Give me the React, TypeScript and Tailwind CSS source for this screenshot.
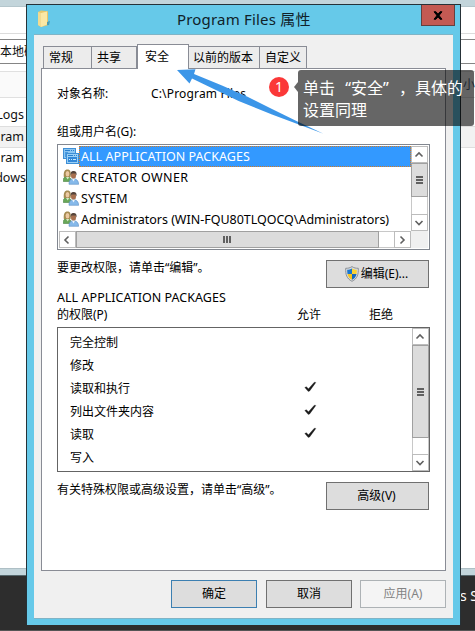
import React from "react";

const users = [
  { name: "ALL APPLICATION PACKAGES", kind: "apps", tracking: "tracking-[0.04px]" },
  { name: "CREATOR OWNER", kind: "people", tracking: "tracking-[0.36px]" },
  { name: "SYSTEM", kind: "people", tracking: "tracking-[0.1px]" },
  { name: "Administrators (WIN-FQU80TLQOCQ\\Administrators)", kind: "people", tracking: "tracking-[-0.02px]" },
];

const permissions = [
  { name: "完全控制", allow: false },
  { name: "修改", allow: false },
  { name: "读取和执行", allow: true },
  { name: "列出文件夹内容", allow: true },
  { name: "读取", allow: true },
  { name: "写入", allow: false },
];

function AppsIcon() {
  return (
    <svg width="16" height="16" viewBox="0 0 16 16" className="mb-px shrink-0">
      <rect x=".5" y=".5" width="12" height="10" fill="#8cc6f2" stroke="#3f8fd6" />
      <path d="M2 2.500h5M8 2.500h1M10 2.500h1" stroke="#2a80cf" />
      <path d="M2 4h3v5H2z" fill="#4a9be0" />
      <rect x="3.500" y="5.500" width="12" height="10" fill="#9ad0f6" stroke="#3f8fd6" />
      <path d="M5 7.500h5M11 7.500h1M13 7.500h1" stroke="#2a80cf" />
      <rect x="5" y="9" width="9" height="5" fill="#3388d8" />
      <path d="M6 11.500h1M8 11.500h1M10 11.500h3" stroke="#c6eaff" />
    </svg>
  );
}

function PeopleIcon() {
  return (
    <svg width="16" height="16" viewBox="0 0 16 16" className="mb-px shrink-0">
      <path d="M.3 12.500C0 9.500 1 7.500 4 7.500s4 2 4.500 5z" fill="#68a758" stroke="#4d8545" strokeWidth=".6" />
      <path d="M.8 8C.3 3 1.500.4 4.500.4 7.500.4 8.200 3 7.600 8z" fill="#a58b52" />
      <ellipse cx="4.500" cy="4.800" rx="1.900" ry="2.700" fill="#ecc9a3" />
      <path d="M3 8l1.700 2.500L6.300 8z" fill="#dbe6c4" />
      <path d="M6 15.300c0-4 1.500-5.500 4.500-5.500s5 1.800 5.200 5.500z" fill="#86b9ea" stroke="#5a8fc4" strokeWidth=".6" />
      <ellipse cx="10.500" cy="6.500" rx="2.500" ry="3.300" fill="#a8704f" />
      <path d="M7.700 6.500C7.200 3 8.700 1.700 10.500 1.900c2.700 0 3.500 2 2.900 4.600l-1-2-3.600.1z" fill="#55443a" />
      <path d="M9 9.800l1.500 2.700 1.500-2.700z" fill="#edf5fd" />
    </svg>
  );
}

function ShieldIcon() {
  return (
    <svg width="14" height="16" viewBox="0 0 14 16" className="shrink-0">
      <path d="M7 .6C5 2 3 2.300.7 2.300c-.3 6 1 10.500 6.300 13 5.300-2.500 6.600-7 6.300-13C11 2.300 9 2 7 .6z" fill="#d6dade" stroke="#83898e" strokeWidth=".9" />
      <path d="M7 2.500C5.500 3.400 4 3.700 2.200 3.800c0 1.500 0 2.700.3 4.200H7z" fill="#1976cf" />
      <path d="M7 2.500c1.500.9 3 1.200 4.800 1.300 0 1.500 0 2.700-.3 4.200H7z" fill="#fbd332" />
      <path d="M2.500 8C3 10.700 4.500 12.500 7 13.800V8z" fill="#f7c51e" />
      <path d="M11.500 8C11 10.700 9.500 12.500 7 13.800V8z" fill="#1668bd" />
    </svg>
  );
}

function Chevron({ dir }: { dir: "up" | "down" | "left" | "right" }) {
  const d = {
    up: "M1.500 6.500L5 3l3.500 3.500",
    down: "M1.500 3L5 6.500 8.500 3",
    left: "M6.500 1.500L3 5l3.500 3.500",
    right: "M3.500 1.500L7 5 3.500 8.500",
  }[dir];
  return (
    <svg width="10" height="10" viewBox="0 0 10 10" className="-ml-px">
      <path d={d} fill="none" stroke="#606060" strokeWidth="1.600" />
    </svg>
  );
}

function ScrollButton({ dir }: { dir: "up" | "down" | "left" | "right" }) {
  return (
    <div className="flex size-[17px] shrink-0 items-center justify-center border border-[#bcbcbc] bg-white">
      <Chevron dir={dir} />
    </div>
  );
}

function Grip({ vertical = false }: { vertical?: boolean }) {
  return (
    <div className={vertical ? "flex flex-col gap-px" : "-ml-[2px] flex gap-px"}>
      {[0, 1, 2].map((i) => (
        <div key={i} className={vertical ? "h-[2px] w-[7px] bg-[#606060]" : "h-[7px] w-[2px] bg-[#606060]"} />
      ))}
    </div>
  );
}

function Tab({ label, className }: { label: string; className: string }) {
  return (
    <div className={"flex h-[22px] shrink-0 items-center whitespace-nowrap border border-b-0 border-[#898c95] bg-[#ececec] " + className}>
      {label}
    </div>
  );
}

function Button({ children, className }: { children: React.ReactNode; className: string }) {
  return (
    <button className={"flex h-7 shrink-0 items-center justify-center whitespace-nowrap border " + className}>
      {children}
    </button>
  );
}

function Backdrop() {
  return (
    <div className="flex h-[631px] w-full flex-col text-[12.5px] text-[#111]">
      <div className="h-[7px] shrink-0 border-b border-[#b4c6cc] bg-[#c3d5db]" />
      <div className="h-[27px] shrink-0 border-b border-[#dcdcdc]" />
      <div className="mt-[5px] flex h-[25px] shrink-0 items-center overflow-hidden border-y border-[#858585] text-[12px] whitespace-nowrap">本地磁盘</div>
      <div className="mt-[7px] flex h-[27px] shrink-0 items-center justify-end border-y border-[#e0e0e0] bg-[#fafafa] text-[12px] text-[#4c607a]">
        <span className="pt-[1px]">小</span>
      </div>
      <div className="mt-[7px] flex h-[21px] shrink-0 items-center"><span className="flex w-6 justify-end">Logs</span></div>
      <div className="flex h-[22px] shrink-0 items-center border-y border-[#dedede] bg-[#f2f2f2]"><span className="w-6 text-right">ram</span></div>
      <div className="flex h-[20px] shrink-0 items-center"><span className="w-6 text-right">ram</span></div>
      <div className="flex h-[21px] shrink-0 items-center"><span className="flex w-[26px] justify-end">dows</span></div>
      <div className="grow" />
      <div className="h-[8px] shrink-0 border-y border-t-[#aebfc5] border-b-[#55676c] bg-[#c3d5db]" />
      <div className="flex h-[55px] shrink-0 justify-end border-b border-[#555] bg-[#2d2d2d] pt-[9px] text-[14px] text-white">
        <span className="w-[15px] whitespace-nowrap leading-[22px]">s S</span>
      </div>
    </div>
  );
}

function PropertiesDialog() {
  return (
    <div className="absolute top-[4px] left-[26px] flex h-[621px] w-[435px] flex-col border border-b-0 border-[#263238] bg-[#66c9e9] px-[7px]">
      <header className="flex h-[29px] shrink-0">
        <div className="w-[18px] shrink-0 pt-[5px]">
          <svg width="16" height="18" viewBox="0 0 16 18" className="ml-[3px]">
            <path d="M1 2l3-1.500 7 .8v14L4 17l-3-2z" fill="#e6c76b" />
            <path d="M4 3l6-1.500v13L4 17z" fill="#fae8a5" />
            <path d="M1 2l3 1v14l-3-2z" fill="#f2db91" />
            <path d="M10 12l3-1-1 4-2 .3z" fill="#4b9cb3" />
          </svg>
        </div>
        <h1 className="grow pl-[125px] pt-[3px] text-[15px] leading-[22px] tracking-[0.19px] text-[#10222a]">Program Files 属性</h1>
        <div className="-mr-[2px] flex h-[21px] w-[34px] shrink-0 items-center justify-center border border-t-0 border-[#64403f] bg-[#c35a53]">
          <svg width="10" height="9" viewBox="0 0 10 9">
            <path d="M1 .8h2L9 8.200H7zM7 .8h2L3 8.200H1z" fill="#000" stroke="#000" />
          </svg>
        </div>
      </header>
      <main className="flex h-[585px] shrink-0 flex-col border-y border-[#80b4c6] bg-[#f0f0f0] px-[7px] pt-[9px]">
        <nav className="relative z-10 flex h-[25px] shrink-0 items-end pl-[2px] pb-[1px]">
          <Tab label="常规" className="w-[49px] pl-[5px]" />
          <Tab label="共享" className="-ml-px w-[46px] pl-[5px]" />
          <div className="-mb-px flex h-[25px] w-[52px] shrink-0 items-center border border-b-0 border-[#898c95] bg-white pl-[7px]">安全</div>
          <Tab label="以前的版本" className="w-[71px] border-l-0 pl-[4px]" />
          <Tab label="自定义" className="-ml-px w-[48px] pl-[5px]" />
        </nav>
        <section className="-mt-px flex h-[503px] shrink-0 flex-col border border-[#898c95] bg-white pl-[15px]">
          <div className="mt-[15px] flex h-[20px] shrink-0 items-center">
            <span className="w-[94px]">对象名称:</span>
            <span className="tracking-[0.16px]">C:\Program Files</span>
          </div>
          <div className="mt-[18px] flex h-[20px] shrink-0 items-center">组或用户名(G):</div>
          <div className="mt-[2px] flex h-[106px] w-[373px] shrink-0 flex-col border border-[#828790] p-px">
            <div className="flex h-[85px]">
              <ul className="w-[352px] shrink-0 pl-[4px] text-[12.5px]">
                {users.map((u, i) => (
                  <li key={u.name} className={"flex h-[21px] items-center whitespace-nowrap " + u.tracking}>
                    {u.kind === "apps" ? <AppsIcon /> : <PeopleIcon />}
                    <span className={i === 0 ? "flex h-[21px] w-[332px] items-center border border-dotted border-[#d47a22] bg-[#3399ff] pt-[2px] pl-px text-white" : "pt-[2px] pl-[2px]"}>
                      {u.name}
                    </span>
                  </li>
                ))}
              </ul>
              <div className="flex w-[17px] flex-col border-x border-[#c8c8c8]">
                <div className="-mx-px"><ScrollButton dir="up" /></div>
                <div className="-mx-px flex h-[34px] items-center justify-center border border-[#a0a0a0] bg-[#dcdcdc]"><Grip vertical /></div>
                <div className="-mx-px mt-auto"><ScrollButton dir="down" /></div>
              </div>
            </div>
            <div className="flex h-[17px] bg-[#f0f0f0]">
              <div className="flex w-[352px] border-y border-[#c8c8c8] bg-white">
                <div className="-my-px"><ScrollButton dir="left" /></div>
                <div className="-my-px flex h-[17px] w-[303px] items-center justify-center border border-[#a0a0a0] bg-[#dcdcdc]"><Grip /></div>
                <div className="-my-px ml-auto"><ScrollButton dir="right" /></div>
              </div>
            </div>
          </div>
          <div className="mt-[10px] flex h-7 shrink-0">
            <span className="w-[269px] leading-[16px]">要更改权限，请单击“编辑”。</span>
            <Button className="w-[103px] border-[#707070] bg-[#dddddd]"><span className="flex -translate-x-px items-center"><ShieldIcon /><span className="ml-[2px]">编辑(E)...</span></span></Button>
          </div>
          <div className="mt-[1px] grid h-[35px] shrink-0 grid-cols-[240px_72px_1fr] leading-[17px]">
            <div><span className="text-[12.5px] tracking-[0.04px]">ALL APPLICATION PACKAGES</span><br />的权限(P)</div>
            <div className="pt-[17px]">允许</div>
            <div className="pt-[17px]">拒绝</div>
          </div>
          <div className="mt-[3px] flex h-[145px] w-[373px] shrink-0 border border-[#646464]">
            <ul className="w-[354px] shrink-0 pt-[3px] pl-[12px]">
              {permissions.map((p) => (
                <li key={p.name} className="flex h-[23px] items-center">
                  <span className="w-[234px]">{p.name}</span>
                  {p.allow && (
                    <svg width="13" height="12" viewBox="0 0 13 12" className="mb-[3px]">
                      <path d="M.8 6.500l1.500-.8 2.200 2.100L10.300 1.200l1.600.2L5.700 9.900l-1.400.7z" fill="#1c1c1c" stroke="#1c1c1c" strokeWidth=".3" />
                    </svg>
                  )}
                </li>
              ))}
            </ul>
            <div className="flex w-[17px] flex-col border-x border-[#c8c8c8]">
              <div className="-mx-px"><ScrollButton dir="up" /></div>
              <div className="-mx-px flex h-[93px] items-center justify-center border border-[#a0a0a0] bg-[#dcdcdc]"><Grip vertical /></div>
              <div className="-mx-px mt-auto"><ScrollButton dir="down" /></div>
            </div>
          </div>
          <div className="mt-[10px] flex h-7 shrink-0">
            <span className="w-[269px] leading-[16px] whitespace-nowrap">有关特殊权限或高级设置，请单击“高级”。</span>
            <Button className="w-[103px] border-[#707070] bg-[#dddddd]"><span className="-translate-x-px">高级(V)</span></Button>
          </div>
        </section>
        <footer className="mt-[9px] flex justify-end">
          <Button className="w-[86px] border-[#3c7fb1] bg-[#dddddd]">确定</Button>
          <Button className="ml-[9px] w-[86px] border-[#707070] bg-[#dddddd]">取消</Button>
          <Button className="ml-[8px] w-[86px] border-[#adb2b5] bg-[#f4f4f4] text-[#838383]">应用(A)</Button>
        </footer>
      </main>
    </div>
  );
}

function Annotation() {
  return (
    <>
      <svg className="absolute top-0 left-0 z-20" width="475" height="631" viewBox="0 0 475 631">
        <path d="M177 70L195.500 69.200l-1.500 4.800L222 85.500l25 11 25 12.500 26.500 13 25 11.700L272 114.500 238.600 101 192 78.500l-2.500 5z" fill="#3c96e8" />
      </svg>
      <div className="absolute top-[77px] left-[269px] z-30 flex size-5 items-center justify-center rounded-full bg-[#fb3838] text-[14px] leading-none text-white">1</div>
      <div className="absolute top-[70px] left-[294px] z-30 flex">
        <svg width="4" height="34" viewBox="0 0 4 34"><path d="M4 12v10L0 17z" fill="#000" fillOpacity=".6" /></svg>
        <div className="h-[56px] w-[176px] rounded-[3px] bg-black/60 pt-[7px] pl-[5px] text-[16px] leading-[22px] whitespace-nowrap text-white">
          单击<span className="inline-block w-[16px] text-right">“</span>安全<span className="inline-block w-[16px]">”</span>，具体的<br />设置同理
        </div>
      </div>
    </>
  );
}

export default function App() {
  return (
    <div className="relative h-[631px] w-[475px] overflow-hidden bg-white font-['Noto_Sans','Noto_Sans_CJK_SC',sans-serif] text-[12px] text-black">
      <Backdrop />
      <PropertiesDialog />
      <Annotation />
    </div>
  );
}
